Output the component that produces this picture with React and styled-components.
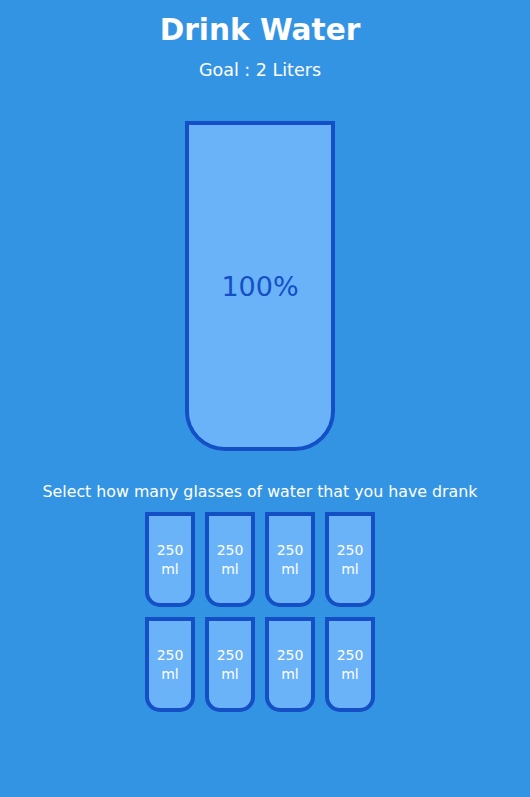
import styled, { createGlobalStyle } from 'styled-components';

const GlobalStyle = createGlobalStyle`
  * {
    box-sizing: border-box;
  }
  body {
    margin: 0;
    background-color: #3494e4;
    color: #fff;
    font-family: 'DejaVu Sans', 'Open Sans', sans-serif;
  }
`;

const Page = styled.div`
  display: flex;
  flex-direction: column;
  align-items: center;
  padding: 0 10px 50px 0;
`;

const Title = styled.h1`
  margin: 10px 0 0;
  font-size: 29.6px;
  line-height: 40px;
  font-weight: 700;
`;

const Goal = styled.h3`
  margin: 9px 0 10px;
  font-size: 17.5px;
  line-height: 22px;
  font-weight: 400;
`;

const Cup = styled.div`
  display: flex;
  flex-direction: column;
  align-items: center;
  justify-content: center;
  overflow: hidden;
  background-color: ${(p) => (p.$full ? '#6ab3f8' : 'rgba(255, 255, 255, 0.9)')};
  border: 4px solid #144fc6;
  color: ${(p) => (p.$full ? '#fff' : '#144fc6')};
  text-align: center;
  width: ${(p) => (p.$small ? '50px' : '150px')};
  height: ${(p) => (p.$small ? '95px' : '330px')};
  border-radius: ${(p) => (p.$small ? '0 0 15px 15px' : '0 0 40px 40px')};
  margin: ${(p) => (p.$small ? '5px' : '30px 0')};
  font-size: ${(p) => (p.$small ? '14px' : '27px')};
  line-height: ${(p) => (p.$small ? '19px' : '34px')};
  cursor: pointer;
`;

const Percentage = styled.div`
  flex: 1;
  align-self: stretch;
  display: flex;
  align-items: center;
  justify-content: center;
  padding-top: 2px;
  background-color: #6ab3f8;
  color: #144fc6;
`;

const Hint = styled.p`
  margin: 0 0 5px;
  text-align: center;
  font-size: 15.8px;
  line-height: 21px;
`;

const Cups = styled.div`
  display: flex;
  flex-wrap: wrap;
  align-items: center;
  justify-content: center;
  width: 280px;
`;

const glasses = Array.from({ length: 8 }, (_, i) => i);

function App() {
  return (
    <>
      <GlobalStyle />
      <Page>
        <Title>Drink Water</Title>
        <Goal>Goal : 2 Liters</Goal>
        <Cup $full>
          <Percentage>100%</Percentage>
        </Cup>
        <Hint>Select how many glasses of water that you have drank</Hint>
        <Cups>
          {glasses.map((i) => (
            <Cup key={i} $small $full>
              250
              <br />
              ml
            </Cup>
          ))}
        </Cups>
      </Page>
    </>
  );
}

export default App;
